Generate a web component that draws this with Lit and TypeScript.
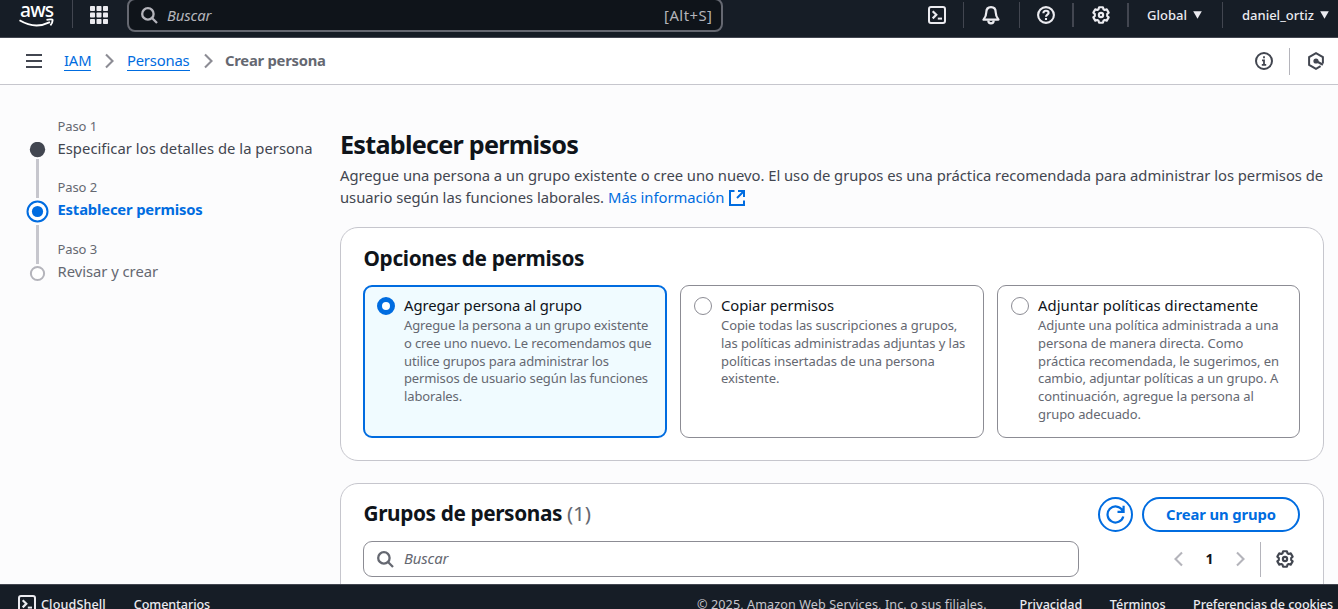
import { LitElement, html, css, svg } from "lit";
import { customElement } from "lit/decorators.js";

const gear = (size: number) => html`<svg width=${size} height=${size} viewBox="0 0 16 16" fill="none" stroke="currentColor" stroke-width="1.9" stroke-linejoin="round">
  <path d="M6.3 1.1h3.4l.5 1.8 1.1.6 1.8-.5 1.7 2.9-1.3 1.3v1.6l1.3 1.3-1.7 2.9-1.8-.5-1.1.6-.5 1.8H6.3l-.5-1.8-1.1-.6-1.8.5-1.7-2.9 1.3-1.3V7.2L1.2 5.9 2.9 3l1.8.5 1.1-.6z"/>
  <circle cx="8" cy="8" r="1.9"/></svg>`;
const terminal = html`<svg width="18" height="18" viewBox="0 0 18 18" fill="none" stroke="currentColor" stroke-width="2">
  <rect x="1" y="1" width="16" height="16" rx="2"/><path d="M4.7 5.2l3.6 3.6-3.6 3.6" stroke-width="2.2"/><path d="M9.8 12.6h4.2"/></svg>`;
const search = html`<svg width="17" height="17" viewBox="0 0 17 17" fill="none" stroke="currentColor" stroke-width="2.3">
  <circle cx="6.9" cy="6.9" r="5.7"/><path d="M11 11l5 5"/></svg>`;
const chevron = (flip = false) => html`<svg width="9" height="16" viewBox="0 0 9 16" fill="none" stroke="currentColor" stroke-width="2.1">
  <path d=${flip ? "M8 1.5L1.5 8 8 14.5" : "M1 1.5L7.5 8 1 14.5"}/></svg>`;
const caret = html`<svg width="9" height="8" viewBox="0 0 9 8" fill="currentColor"><path d="M.2.3h8.6L4.5 7.8z"/></svg>`;

const options = [
  {
    title: "Agregar persona al grupo",
    selected: true,
    lines: ["Agregue la persona a un grupo existente", "o cree uno nuevo. Le recomendamos que", "utilice grupos para administrar los", "permisos de usuario según las funciones", "laborales."],
  },
  {
    title: "Copiar permisos",
    selected: false,
    lines: ["Copie todas las suscripciones a grupos,", "las políticas administradas adjuntas y las", "políticas insertadas de una persona", "existente."],
  },
  {
    title: "Adjuntar políticas directamente",
    selected: false,
    lines: ["Adjunte una política administrada a una", "persona de manera directa. Como", "práctica recomendada, le sugerimos, en", "cambio, adjuntar políticas a un grupo. A", "continuación, agregue la persona al", "grupo adecuado."],
  },
];

@customElement("app-root")
export class AppRoot extends LitElement {
  static styles = css`
    :host { display: flex; flex-direction: column; width: 1338px; height: 609px; overflow: hidden; background: #fcfcfd; color: #424650; font: 14.8px/22px "Noto Sans", sans-serif; white-space: nowrap; }
    * { box-sizing: border-box; }
    svg { display: block; flex: none; }
    .top { flex: none; display: flex; height: 38px; background: #161d26; border-bottom: 1px solid #424650; color: #ebebf0; font-size: 13px; font-weight: 500; }
    .logo { width: 73px; height: 28px; padding: 0 0 0 19px; border-right: 1px solid #424650; }
    .brand { height: 20px; font: 500 19.2px/20px "Noto Sans", sans-serif; letter-spacing: -.8px; padding-left: 1px; color: #fff; }
    .smile { margin-top: -2px; }
    .sep { border-right: 1px solid #424650; height: 26px; margin-top: 2px; flex: none; }
    .sep.wide { border-right-width: 2px; height: 24px; margin: 3px 1px 0 -1px; }
    .cell { height: 30px; display: flex; align-items: center; flex: none; }
    .apps { width: 54px; padding-left: 17px; }
    .find { width: 596px; height: 34px; margin-top: -2px; border: 2px solid #656871; border-radius: 8px; background: #0f141a; display: flex; align-items: center; padding: 0 8.5px 0 12px; color: #b4b4bb; font-weight: 400; }
    .find em, .filter em { flex: 1; font-size: 14.8px; padding-left: 10px; letter-spacing: -.1px; }
    .find em { padding-left: 9px; }
    .find kbd { font: 14.8px/22px "Noto Sans", sans-serif; letter-spacing: .5px; padding-bottom: 1px; }
    .filter em { padding-bottom: 2px; }
    .tools { margin-left: auto; display: flex; }
    .crumbs { flex: none; height: 47px; display: flex; align-items: center; background: #fff; border-bottom: 1px solid #c6c6cd; padding: 0 13px 0 26px; }
    .crumbs a { color: #006ce0; line-height: 19px; border-bottom: 1px solid #006ce0; letter-spacing: -.17px; }
    .crumbs b { color: #656871; font-weight: 700; letter-spacing: -.25px; padding-bottom: 2px; }
    .crumbs .chev { color: #8c8c94; margin: 0 12.5px 0 14px; }
    .crumbs .end { margin-left: auto; display: flex; align-items: center; }
    .bar { width: 1px; height: 27px; background: #b4b4bb; margin: 0 17px 0 16px; }
    .body { flex: 1; min-height: 0; overflow: hidden; display: flex; }
    .steps { width: 340px; flex: none; padding: 31px 0 0 26px; display: flex; }
    .track { width: 23px; display: flex; flex-direction: column; align-items: center; padding-top: 26px; }
    .names { padding-left: 8.5px; }
    .step { height: 62px; }
    .step:first-child { height: 61px; }
    .step small { display: block; font-size: 13px; line-height: 21px; color: #656871; letter-spacing: -.1px; }
    .step span { display: block; line-height: 23px; letter-spacing: .03px; }
    .step .now { color: #006ce0; font-weight: 700; letter-spacing: -.17px; }
    .step .later { color: #656871; letter-spacing: -.03px; }
    .main { width: 984px; flex: none; padding-top: 43px; }
    h1 { margin: 0; font-size: 25.2px; line-height: 32px; font-weight: 700; color: #0f141a; letter-spacing: -.75px; }
    h2 { margin: 0; font-size: 20.8px; line-height: 26px; font-weight: 700; color: #0f141a; letter-spacing: -.34px; padding-left: .5px; }
    h2 i { font-style: normal; font-weight: 400; color: #656871; letter-spacing: -.2px; }
    .intro { padding-top: 4px; height: 51px; letter-spacing: -.033px; }
    .intro div { display: flex; align-items: center; height: 22px; }
    .intro a { color: #006ce0; display: flex; gap: 5px; align-items: center; margin-left: 4px; letter-spacing: -.04px; }
    .intro svg { margin-top: 2px; }
    .panel { border: 1px solid #c6c6cd; border-radius: 18px; background: #fff; padding: 17px 23px 0 22px; }
    .opts { height: 234px; margin-top: 16px; }
    .cards { display: grid; grid-template-columns: 304px 304px 303px; gap: 13px; margin-top: 14px; }
    .card { height: 153px; border: 1px solid #8c8c94; border-radius: 9px; display: flex; padding: 9px 0 0 13px; gap: 9px; }
    .card.on { border: 2px solid #006ce0; background: #f0fbff; padding: 8px 0 0 12px; }
    .radio { width: 18px; height: 18px; border: 1px solid #8c8c94; border-radius: 50%; background: #fff; flex: none; margin-top: 2px; }
    .on .radio { border: 5px solid #006ce0; }
    .card strong { display: block; color: #0f141a; font-weight: 400; line-height: 21px; letter-spacing: -.06px; }
    .card:last-child strong { letter-spacing: .06px; }
    .card p { margin: 1px 0 0; font-size: 13px; line-height: 17.8px; color: #656871; letter-spacing: -.08px; }
    .card.on p { letter-spacing: -.13px; }
    .card p span { display: block; }
    .groups { height: 200px; margin-top: 22px; padding-top: 13px; }
    .groups h2 { padding-bottom: 3px; letter-spacing: -.39px; }
    .row { display: flex; align-items: center; }
    .refresh { width: 35px; height: 35px; border: 2px solid #006ce0; border-radius: 50%; color: #006ce0; display: grid; place-items: center; margin-left: auto; }
    .create { width: 158px; height: 35px; border: 2px solid #006ce0; border-radius: 18px; color: #006ce0; font-weight: 700; margin-left: 9px; text-align: center; line-height: 31px; letter-spacing: -.1px; }
    .filter { width: 716px; height: 36px; border: 1px solid #8c8c94; border-radius: 9px; display: flex; align-items: center; padding: 0 13px; color: #656871; }
    .second { margin-top: 9px; }
    .pager { display: flex; align-items: center; margin-left: 95px; color: #b4b4bb; }
    .pager b { color: #0f141a; width: 53px; text-align: center; font-size: 14px; }
    .vr { width: 1px; height: 35px; background: #b4b4bb; margin: 0 15px 0 15px; }
    .foot { flex: none; height: 25px; overflow: hidden; background: #161d26; border-top: 1px solid #424650; color: #ebebf0; font-size: 12.6px; font-weight: 500; display: flex; padding: 10px 5px 0 18px; line-height: 19px; }
    .foot .end { margin-left: auto; display: flex; }
    .legal { color: #c6c6cd; font-weight: 400; letter-spacing: .1px; }
    .dark { color: #424650; }
  `;

  render() {
    return html`
      <header class="top">
        <div class="logo">
          <div class="brand">aws</div>
          <svg class="smile" width="36" height="10" viewBox="0 0 36 10" fill="none" stroke="#fff" stroke-width="1.9"><path d="M.5 2.3Q16 11.5 31 4.2M27.5 1.9q6.2-1.1 6.1.3 0 2.8-2.2 5.1" /></svg>
        </div>
        <div class="cell apps"><svg width="18" height="18" viewBox="0 0 18 18" fill="currentColor">${[0, 6.5, 13].map((y) => [0, 6.5, 13].map((x) => svg`<rect x=${x} y=${y} width="5" height="5" rx=".8"/>`))}</svg></div>
        <div class="find">${search}<em>Buscar</em><kbd>[Alt+S]</kbd></div>
        <div class="tools">
          <div class="cell" style="width:35px">${terminal}</div><div class="sep"></div>
          <div class="cell" style="width:55px;padding-left:18px"><svg width="18" height="19" viewBox="0 0 18 19" fill="none" stroke="currentColor" stroke-width="2.2" stroke-linejoin="round"><path d="M9 1.2C5.8 1.2 4.3 3.5 4.3 6.2c0 3.7-1 5.2-2.8 7.4h15c-1.8-2.2-2.8-3.7-2.8-7.4C13.7 3.5 12.2 1.2 9 1.2z"/><path d="M6.3 14.5a2.7 2.9 0 0 0 5.4 0"/></svg></div><div class="sep"></div>
          <div class="cell" style="width:53px;padding-left:17px"><svg width="18" height="18" viewBox="0 0 18 18" fill="none" stroke="currentColor" stroke-width="2.1"><circle cx="9" cy="9" r="7.9"/><path d="M6.4 7.2C6.4 5.6 7.5 4.7 9 4.7s2.6.9 2.6 2.2C11.6 8.6 9 8.7 9 10.7"/><path d="M9 12v2"/></svg></div><div class="sep wide"></div>
          <div class="cell" style="width:53px;padding-left:17px">${gear(18)}</div><div class="sep wide"></div>
          <div class="cell" style="width:92px;padding-left:17px;gap:6px">Global ${caret}</div><div class="sep"></div>
          <div class="cell" style="width:115px;padding-left:19px;gap:6px">daniel_ortiz ${caret}</div>
        </div>
      </header>
      <nav class="crumbs">
        <svg class="dark" width="16" height="14" viewBox="0 0 16 14" fill="currentColor"><path d="M0 0h16v2H0zM0 6h16v2H0zM0 12h16v2H0z"/></svg>
        <a style="margin-left:22px">IAM</a><span class="chev">${chevron()}</span><a>Personas</a><span class="chev">${chevron()}</span><b>Crear persona</b>
        <div class="end dark">
          <svg width="18" height="18" viewBox="0 0 18 18" fill="none" stroke="currentColor" stroke-width="2"><circle cx="9" cy="9" r="8"/><path d="M9 4.3v2M7 8.3h2v4M6.8 12.8h4.4" stroke-width="1.8"/></svg>
          <div class="bar"></div>
          <svg width="18" height="18" viewBox="0 0 18 18" fill="none" stroke="currentColor" stroke-width="2"><path d="M15.9 11.5V5.2L9 1.2l-6.900 4v7.6l6.900 4 4.6-2.7"/><circle cx="9" cy="9" r="2.6" fill="currentColor" stroke="none"/><path d="M9.5 9.3l6.4 3.4" stroke-width="2.2"/></svg>
        </div>
      </nav>
      <div class="body">
        <aside class="steps">
          <div class="track">
            <svg width="23" height="150" viewBox="0 0 23 150" fill="none">
              <path d="M11.5 17v39M11.5 83v39" stroke="#c6c6cd" stroke-width="3"/>
              <circle cx="11.5" cy="7.5" r="7.7" fill="#424650"/>
              <circle cx="11.5" cy="69.5" r="10" stroke="#006ce0" stroke-width="2" fill="#fff"/><circle cx="11.5" cy="69.5" r="5.6" fill="#006ce0"/>
              <circle cx="11.5" cy="131.5" r="6.6" stroke="#b4b4bb" stroke-width="2" fill="#fff"/>
            </svg>
          </div>
          <div class="names">
            <div class="step"><small>Paso 1</small><span>Especificar los detalles de la persona</span></div>
            <div class="step"><small>Paso 2</small><span class="now">Establecer permisos</span></div>
            <div class="step"><small>Paso 3</small><span class="later">Revisar y crear</span></div>
          </div>
        </aside>
        <main class="main">
          <h1>Establecer permisos</h1>
          <div class="intro">
            <div>Agregue una persona a un grupo existente o cree uno nuevo. El uso de grupos es una práctica recomendada para administrar los permisos de</div>
            <div>usuario según las funciones laborales. <a>Más información <svg width="16" height="16" viewBox="0 0 16 16" fill="none" stroke="currentColor" stroke-width="2"><path d="M5.5 1H1v14h14v-4.5M9 1h6v6M15 1L8 8"/></svg></a></div>
          </div>
          <section class="panel opts">
            <h2>Opciones de permisos</h2>
            <div class="cards">
              ${options.map((o) => html`<div class="card ${o.selected ? "on" : ""}"><div class="radio"></div><div><strong>${o.title}</strong><p>${o.lines.map((l) => html`<span>${l}</span>`)}</p></div></div>`)}
            </div>
          </section>
          <section class="panel groups">
            <div class="row"><h2>Grupos de personas <i>(1)</i></h2>
              <div class="refresh"><svg width="19" height="19" viewBox="0 0 19 19" fill="none" stroke="currentColor" stroke-width="2.2"><path d="M17.3 11.5A8 8 0 1 1 16.5 5.5L17 6.5M17.6.8v6H11.5"/></svg></div>
              <div class="create">Crear un grupo</div></div>
            <div class="row second"><div class="filter">${search}<em>Buscar</em></div>
              <div class="pager">${chevron(true)}<b>1</b>${chevron()}</div><div class="vr"></div><span class="dark">${gear(18)}</span></div>
          </section>
        </main>
      </div>
      <footer class="foot">
        ${terminal}<span style="margin-left:5px;letter-spacing:.12px">CloudShell</span><span style="margin-left:28px;letter-spacing:-.1px">Comentarios</span>
        <div class="end"><span class="legal">© 2025, Amazon Web Services, Inc. o sus filiales.</span><span style="margin-left:33px">Privacidad</span><span style="margin-left:27.5px">Términos</span><span style="margin-left:27.5px;letter-spacing:-.08px">Preferencias de cookies</span></div>
      </footer>`;
  }
}
